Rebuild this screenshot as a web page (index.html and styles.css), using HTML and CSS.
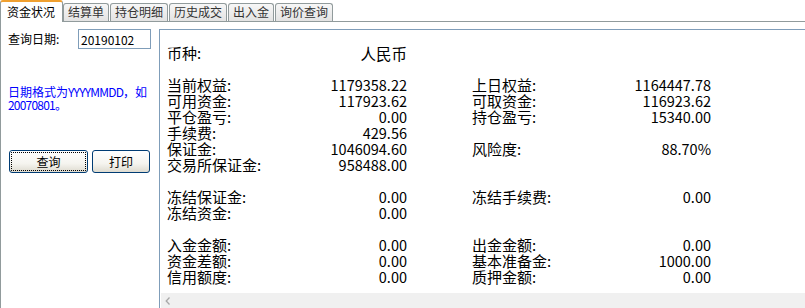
FILE: index.html
```html
<!DOCTYPE html>
<html lang="zh-CN">
<head>
<meta charset="utf-8">
<title>资金状况</title>
<link rel="stylesheet" href="styles.css">
</head>
<body>
<div class="app">
  <div class="tabs">
    <div class="tab active">资金状况</div>
    <div class="tab">结算单</div>
    <div class="tab">持仓明细</div>
    <div class="tab">历史成交</div>
    <div class="tab">出入金</div>
    <div class="tab">询价查询</div>
  </div>
  <div class="pane">
    <div class="side">
      <div class="date-row">
        <span class="lbl">查询日期:</span>
        <input class="date" type="text" value="20190102">
      </div>
      <p class="hint">日期格式为<span class="lat">YYYYMMDD</span>，如<br><span class="lat">20070801</span>。</p>
      <div class="btns">
        <button class="btn btn-query">查询</button>
        <button class="btn btn-print">打印</button>
      </div>
    </div>
    <div class="main">
      <div class="sheet">
        <div class="col col-left">
          <div class="r"><span>币种:</span><span class="cn">人民币</span></div>
          <div class="r blank"></div>
          <div class="r"><span>当前权益:</span><span class="v">1179358.22</span></div>
          <div class="r"><span>可用资金:</span><span class="v">117923.62</span></div>
          <div class="r"><span>平仓盈亏:</span><span class="v">0.00</span></div>
          <div class="r"><span>手续费:</span><span class="v">429.56</span></div>
          <div class="r"><span>保证金:</span><span class="v">1046094.60</span></div>
          <div class="r"><span>交易所保证金:</span><span class="v">958488.00</span></div>
          <div class="r blank"></div>
          <div class="r"><span>冻结保证金:</span><span class="v">0.00</span></div>
          <div class="r"><span>冻结资金:</span><span class="v">0.00</span></div>
          <div class="r blank"></div>
          <div class="r"><span>入金金额:</span><span class="v">0.00</span></div>
          <div class="r"><span>资金差额:</span><span class="v">0.00</span></div>
          <div class="r"><span>信用额度:</span><span class="v">0.00</span></div>
        </div>
        <div class="col col-right">
          <div class="r blank"></div>
          <div class="r blank"></div>
          <div class="r"><span>上日权益:</span><span class="v">1164447.78</span></div>
          <div class="r"><span>可取资金:</span><span class="v">116923.62</span></div>
          <div class="r"><span>持仓盈亏:</span><span class="v">15340.00</span></div>
          <div class="r blank"></div>
          <div class="r"><span>风险度:</span><span class="v">88.70%</span></div>
          <div class="r blank"></div>
          <div class="r blank"></div>
          <div class="r"><span>冻结手续费:</span><span class="v">0.00</span></div>
          <div class="r blank"></div>
          <div class="r blank"></div>
          <div class="r"><span>出金金额:</span><span class="v">0.00</span></div>
          <div class="r"><span>基本准备金:</span><span class="v">1000.00</span></div>
          <div class="r"><span>质押金额:</span><span class="v">0.00</span></div>
        </div>
      </div>
      <div class="hscroll">
        <svg class="arrow" width="6" height="8" viewBox="0 0 6 8"><path d="M4.5 0.5 L1.2 4 L4.5 7.5" fill="none" stroke="#a8a8a8" stroke-width="1.3"/></svg>
      </div>
    </div>
  </div>
</div>
</body>
</html>
```
FILE: styles.css
```css
* { box-sizing: border-box; }
html, body {
  margin: 0;
  padding: 0;
  background: #ffffff;
}
body {
  font-family: "Noto Sans CJK SC", "Noto Sans", sans-serif;
  color: #000;
  overflow: hidden;
}
.app {
  width: 805px;
  height: 308px;
  display: flex;
  flex-direction: column;
}

/* tabs */
.tabs {
  height: 21px;
  display: flex;
  align-items: flex-end;
  background: #fff;
}
.tab {
  height: 18px;
  line-height: 16px;
  font-size: 12px;
  color: #333;
  padding: 0 4px;
  margin-left: 1px;
  border: 1px solid #919b9c;
  border-bottom: none;
  border-radius: 3px 3px 0 0;
  background: linear-gradient(#f7f7f7, #e3e3e3);
  white-space: nowrap;
}
.tab.active {
  position: relative;
  z-index: 1;
  height: 22px;
  margin-bottom: -1px;
  margin-left: 0;
  padding: 0 7px 0 6px;
  line-height: 19px;
  color: #000;
  background: #fff;
  border-top: 2px solid #f0a030;
  font-size: 12px;
}
.tab.active + .tab { margin-left: 0; }

/* pane */
.pane {
  flex: 1;
  display: flex;
  border-top: 1px solid #919b9c;
  border-left: 1px solid #919b9c;
  min-height: 0;
}
.side {
  width: 158px;
  padding: 7px 0 0 7px;
  font-size: 12px;
}
.date-row {
  display: flex;
  align-items: center;
  height: 20px;
}
.lbl {
  width: 70px;
  line-height: 14px;
  font-size: 12px;
}
.date {
  width: 73px;
  height: 20px;
  border: 1px solid #7f9db9;
  padding: 0 0 0 2px;
  font-family: "Noto Sans CJK SC", "Noto Sans", sans-serif;
  font-size: 12px;
  color: #000;
  outline: none;
}
.hint {
  margin: 37px 0 0 0;
  color: #0000ff;
  font-size: 12px;
  line-height: 12.5px;
  white-space: nowrap;
}
.hint .lat {
  letter-spacing: -0.8px;
}
.btns {
  display: flex;
  gap: 4px;
  margin-top: 39px;
  padding-left: 1px;
}
.btn {
  height: 23px;
  border: 1px solid #003c74;
  border-radius: 3px;
  background: linear-gradient(#ffffff 0%, #f5f4ef 60%, #dedbd0 100%);
  font-family: "Noto Sans CJK SC", "Noto Sans", sans-serif;
  font-size: 12px;
  color: #000;
  padding: 0;
  line-height: 20px;
}
.btn-query {
  width: 79px;
  outline: 1px dotted #000;
  outline-offset: -3px;
}
.btn-print { width: 58px; }

/* main */
.main {
  flex: 1;
  margin-top: 7px;
  border-top: 1px solid #7f9db9;
  border-left: 1px solid #7f9db9;
  display: flex;
  flex-direction: column;
  min-height: 0;
}
.sheet {
  flex: 1;
  display: flex;
  gap: 65px;
  padding: 15px 0 0 7px;
  overflow: hidden;
}
.col-left { width: 240px; }
.col-right { width: 239px; }
.r {
  display: flex;
  justify-content: space-between;
  height: 16px;
  line-height: 16px;
  font-size: 15px;
  white-space: nowrap;
}
.r .cn {
  font-size: 15.5px;
}
.r .v {
  font-size: 14.5px;
}
.hscroll {
  height: 15px;
  margin-left: 1px;
  background: #f0f0f0;
  display: flex;
  align-items: center;
  padding-left: 4px;
}
.arrow { display: block; }
```
